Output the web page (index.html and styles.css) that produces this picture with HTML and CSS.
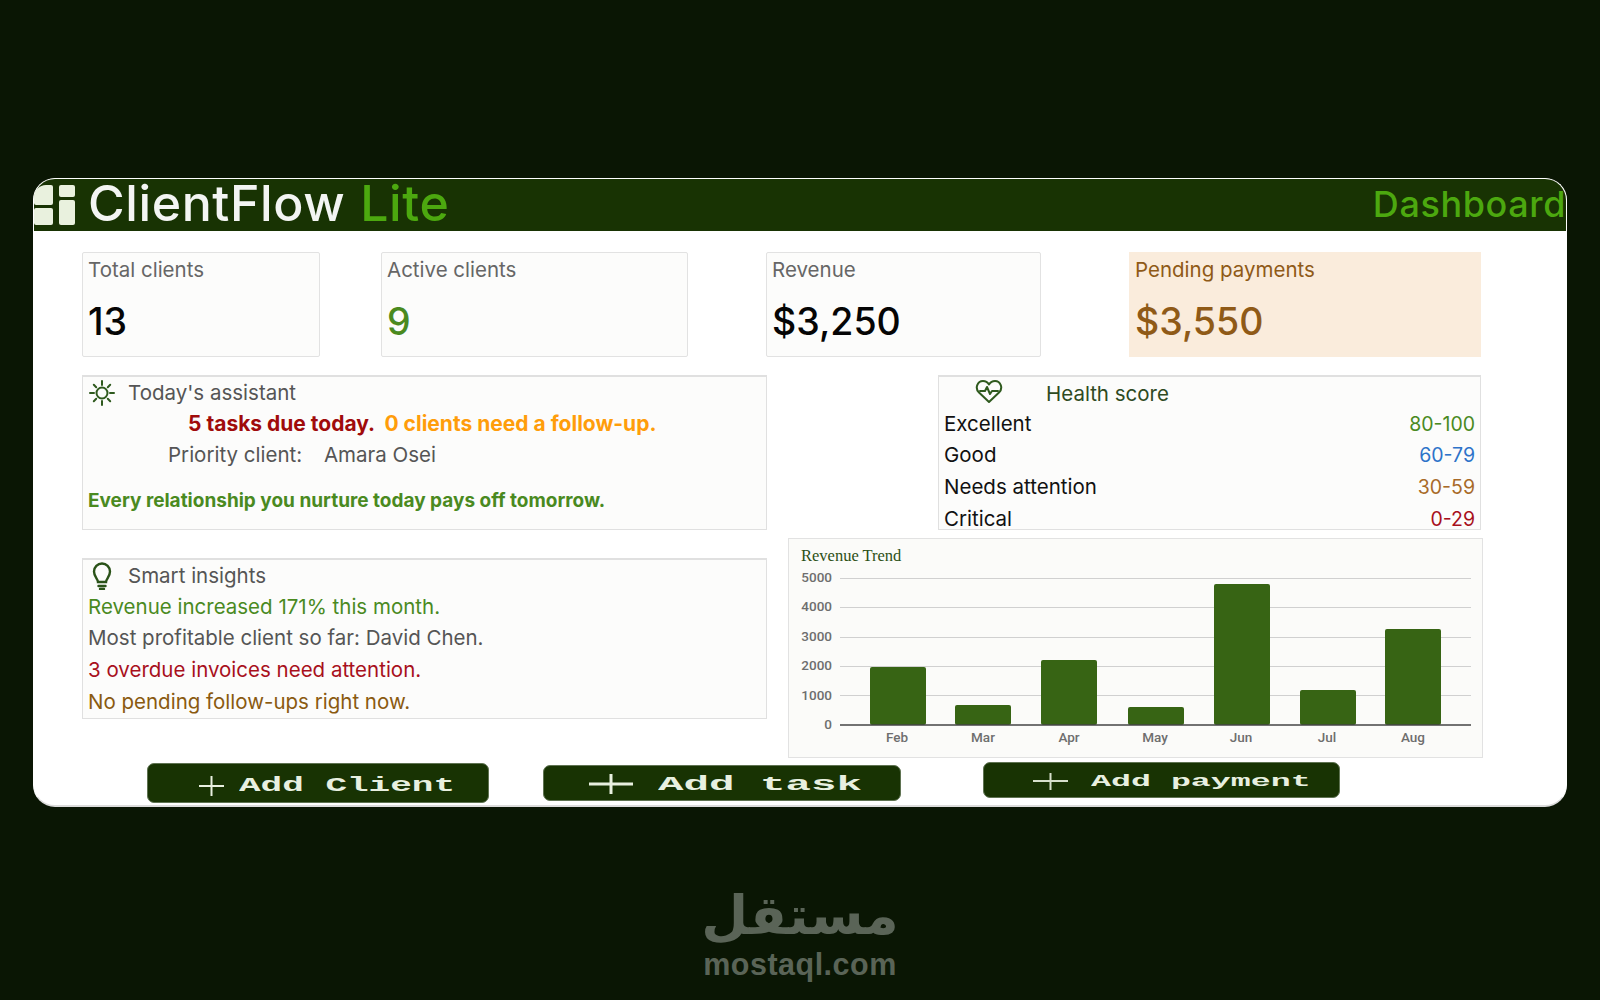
FILE: index.html
```html
<!DOCTYPE html>
<html lang="en">
<head>
    <meta charset="UTF-8">
    <title>ClientFlow Lite - Dashboard</title>
    <link rel="stylesheet" href="styles.css">
</head>
<body>

    <div class="sheet">
        <header class="topbar">
            <div class="brand">
                <div class="tiles">
                    <div class="tiles-col">
                        <span class="tile tile-tl"></span>
                        <span class="tile tile-bl"></span>
                    </div>
                    <div class="tiles-col">
                        <span class="tile tile-tr"></span>
                        <span class="tile tile-br"></span>
                    </div>
                </div>
                <span class="brand-name">ClientFlow <span class="brand-lite">Lite</span></span>
            </div>
            <div class="page-name">Dashboard</div>
        </header>

        <section class="stats">
            <div class="stat stat-total">
                <div class="stat-label">Total clients</div>
                <div class="stat-value">13</div>
            </div>
            <div class="stat stat-active">
                <div class="stat-label">Active clients</div>
                <div class="stat-value text-green">9</div>
            </div>
            <div class="stat stat-revenue">
                <div class="stat-label">Revenue</div>
                <div class="stat-value">$3,250</div>
            </div>
            <div class="stat stat-pending">
                <div class="stat-label">Pending payments</div>
                <div class="stat-value">$3,550</div>
            </div>
        </section>

        <section class="main">
            <div class="left-col">
                <div class="panel assistant">
                    <div class="row panel-title">
                        <svg class="title-icon" width="28" height="28" viewBox="0 0 28 28" fill="none" stroke="#2f5a1e" stroke-width="2" stroke-linecap="round">
                            <circle cx="14" cy="14" r="5.5"/>
                            <path d="M14 2v4M14 22v4M2 14h4M22 14h4M5.8 5.8l2.4 2.4M19.8 19.8l2.4 2.4M5.8 22.2l2.4-2.4M19.8 8.2l2.4-2.4"/>
                        </svg>
                        <span>Today's assistant</span>
                    </div>
                    <div class="row due-line">
                        <span class="text-due">5 tasks due today.</span>
                        <span class="text-follow">0 clients need a follow-up.</span>
                    </div>
                    <div class="row priority-line">
                        <span>Priority client:</span>
                        <span class="priority-name">Amara Osei</span>
                    </div>
                    <div class="row quote">Every relationship you nurture today pays off tomorrow.</div>
                </div>

                <div class="panel insights">
                    <div class="row panel-title">
                        <svg class="title-icon" width="28" height="28" viewBox="0 0 28 28" fill="none" stroke="#2a5218" stroke-width="2.4" stroke-linecap="round">
                            <path d="M10 20c0-3-4-5-4-10.500a8 8 0 0 1 16 0c0 5.500-4 7.500-4 10.500z"/>
                            <path d="M10.500 24h7M12 27h4"/>
                        </svg>
                        <span>Smart insights</span>
                    </div>
                    <div class="row text-green">Revenue increased 171% this month.</div>
                    <div class="row">Most profitable client so far: David Chen.</div>
                    <div class="row text-red">3 overdue invoices need attention.</div>
                    <div class="row text-brown">No pending follow-ups right now.</div>
                </div>
            </div>

            <div class="right-col">
                <div class="panel health">
                    <div class="row health-title">
                        <svg class="health-icon" width="28" height="25" viewBox="0 0 28 25" fill="none" stroke="#2f5a1e" stroke-width="2" stroke-linejoin="round" stroke-linecap="round">
                            <path d="M14 23L4 13.500C-.5 9 2.500 2 8 2c2.800 0 4.800 1.500 6 3.500C15.200 3.500 17.200 2 20 2c5.500 0 8.500 7 4 11.500z"/>
                            <path d="M5 12h5l2-4 3 7 2-3h6"/>
                        </svg>
                        <span>Health score</span>
                    </div>
                    <div class="row score"><span>Excellent</span><span class="score-range text-green">80-100</span></div>
                    <div class="row score"><span>Good</span><span class="score-range text-blue">60-79</span></div>
                    <div class="row score"><span>Needs attention</span><span class="score-range text-tan">30-59</span></div>
                    <div class="row score"><span>Critical</span><span class="score-range text-red">0-29</span></div>
                </div>

                <div class="chart-box">
                    <svg class="chart" width="693" height="218" viewBox="0 0 693 218">
                        <text class="chart-title" x="12" y="22">Revenue Trend</text>
                        <g class="grid-lines">
                            <line x1="51" x2="682" y1="39.500" y2="39.500"/>
                            <line x1="51" x2="682" y1="68.500" y2="68.500"/>
                            <line x1="51" x2="682" y1="98.500" y2="98.500"/>
                            <line x1="51" x2="682" y1="127.500" y2="127.500"/>
                            <line x1="51" x2="682" y1="156.500" y2="156.500"/>
                        </g>
                        <g class="bars">
                            <rect x="81" y="128" width="56" height="58" rx="2"/>
                            <rect x="166" y="166" width="56" height="20" rx="2"/>
                            <rect x="252" y="121" width="56" height="65" rx="2"/>
                            <rect x="339" y="168" width="56" height="18" rx="2"/>
                            <rect x="425" y="45" width="56" height="141" rx="2"/>
                            <rect x="511" y="151" width="56" height="35" rx="2"/>
                            <rect x="596" y="90" width="56" height="96" rx="2"/>
                        </g>
                        <line class="axis" x1="51" x2="682" y1="186" y2="186"/>
                        <g class="y-labels">
                            <text x="43" y="43">5000</text>
                            <text x="43" y="72">4000</text>
                            <text x="43" y="102">3000</text>
                            <text x="43" y="131">2000</text>
                            <text x="43" y="161">1000</text>
                            <text x="43" y="190">0</text>
                        </g>
                        <g class="x-labels">
                            <text x="108" y="203">Feb</text>
                            <text x="194" y="203">Mar</text>
                            <text x="280" y="203">Apr</text>
                            <text x="366" y="203">May</text>
                            <text x="452" y="203">Jun</text>
                            <text x="538" y="203">Jul</text>
                            <text x="624" y="203">Aug</text>
                        </g>
                    </svg>
                </div>
            </div>
        </section>

        <section class="actions">
            <button class="btn btn-client" type="button">
                <svg width="25" height="20" viewBox="0 0 25 20" stroke="#e8f0e0" stroke-width="2"><path d="M0 10h25M12.500 0v20"/></svg>
                <span class="btn-text">Add Client</span>
            </button>
            <button class="btn btn-task" type="button">
                <svg width="44" height="20" viewBox="0 0 44 20" stroke="#e8f0e0" stroke-width="3"><path d="M0 10h44M22 0v20"/></svg>
                <span class="btn-text">Add task</span>
            </button>
            <button class="btn btn-payment" type="button">
                <svg width="35" height="17" viewBox="0 0 35 17" stroke="#d6e0cc" stroke-width="2"><path d="M0 8h35M17.500 0v17"/></svg>
                <span class="btn-text">Add payment</span>
            </button>
        </section>
    </div>

    <footer class="watermark">
        <div class="watermark-ar" lang="ar" dir="rtl">مستقل</div>
        <div class="watermark-en">mostaql.com</div>
    </footer>

</body>
</html>
```

FILE: styles.css
```css
* {
    margin: 0;
    padding: 0;
    box-sizing: border-box;
}

body {
    font-family: Inter, "Noto Sans", sans-serif;
    background-color: #0a1604;
    height: 1000px;
    overflow: hidden;
}

.sheet {
    width: 1534px;
    height: 629px;
    margin: 178px 0 0 33px;
    background-color: #fff;
    border: 1px solid #fff;
    border-bottom: 2px solid #dcdcdc;
    border-radius: 22px;
}

/* top bar */
.topbar {
    height: 52px;
    background-color: #183303;
    border-radius: 21px 21px 0 0;
    display: flex;
    justify-content: space-between;
    align-items: center;
}

.brand {
    display: flex;
    align-items: center;
}

.tiles {
    display: flex;
    gap: 6px;
    width: 54px;
}

.tiles-col {
    display: flex;
    flex-direction: column;
    gap: 3px;
}

.tile {
    display: block;
    background-color: #e9f1de;
    border-radius: 2px;
}

.tiles-col:first-child .tile {
    width: 19px;
}

.tiles-col:last-child .tile {
    width: 16px;
}

.tile-tl {
    height: 20px;
    border-top-left-radius: 12px;
}

.tile-bl {
    height: 17px;
}

.tile-tr {
    height: 12px;
}

.tile-br {
    height: 25px;
}

.brand-name {
    font-size: 50px;
    line-height: 46px;
    font-weight: 500;
    color: #f3f5f3;
    letter-spacing: 0.6px;
    padding-bottom: 5px;
}

.brand-lite {
    color: #4ca80f;
    margin-left: 1px;
}

.page-name {
    font-size: 36px;
    line-height: 44px;
    font-weight: 500;
    letter-spacing: 0.6px;
    color: #4ca80f;
    white-space: nowrap;
    padding-bottom: 3px;
}

/* stat cards */
.stats {
    display: flex;
    margin: 21px 0 0 48px;
}

.stat {
    height: 105px;
    padding: 5px 5px;
    background-color: #fcfcfb;
    border: 1px solid #e2e2e2;
    border-radius: 2px;
}

.stat-total {
    width: 238px;
}

.stat-active {
    width: 307px;
    margin-left: 61px;
}

.stat-revenue {
    width: 275px;
    margin-left: 78px;
}

.stat-pending {
    width: 352px;
    margin-left: 88px;
    background-color: #faecdc;
    border-color: #faecdc;
    border-radius: 0;
    color: #8f5a17;
}

.stat-label {
    font-size: 20.500px;
    line-height: 24px;
    color: #666;
}

.stat-value {
    font-size: 37.500px;
    font-weight: 500;
    line-height: 44px;
    margin-top: 18px;
    color: #050505;
}

.stat-pending .stat-label,
.stat-pending .stat-value {
    color: #8f5a17;
}

/* panels */
.main {
    display: flex;
    margin: 18px 0 0 48px;
    height: 383px;
}

.left-col {
    width: 706px;
}

.right-col {
    width: 696px;
}

.panel {
    background-color: #fcfcfb;
    border: 1px solid #e0e0e0;
    border-top-width: 2px;
    font-size: 20.500px;
    color: #555;
}

.row {
    height: 31.700px;
    line-height: 30px;
    padding-left: 5px;
    white-space: nowrap;
}

.assistant {
    width: 685px;
    height: 155px;
}

.insights {
    width: 685px;
    height: 161px;
    margin-top: 28px;
}

.panel-title {
    display: flex;
    align-items: center;
}

.title-icon {
    margin-right: 12px;
    flex-shrink: 0;
}

.due-line {
    padding-left: 105px;
    font-size: 21px;
    font-weight: 700;
}

.text-due {
    color: #a00b0b;
}

.text-follow {
    color: #ff9d0a;
    margin-left: 5px;
}

.priority-line {
    padding-left: 85px;
}

.priority-name {
    margin-left: 16px;
}

.quote {
    margin-top: 14px;
    font-size: 19px;
    font-weight: 700;
    color: #4a8a1f;
}

.text-green {
    color: #4a8a1f;
}

.text-red {
    color: #a8101c;
}

.text-brown {
    color: #8a5a10;
}

.text-blue {
    color: #2d73c9;
}

.text-tan {
    color: #a86a28;
}

.health {
    width: 543px;
    height: 155px;
    margin-left: 150px;
    color: #111;
    overflow: hidden;
}

.health-title {
    display: flex;
    align-items: flex-start;
    padding-left: 36px;
    color: #2e4a22;
}

.health-title span {
    margin-left: 43px;
    line-height: 34px;
}

.health-icon {
    margin-top: 2px;
}

.score {
    display: flex;
    justify-content: space-between;
    padding-right: 5px;
}

.score-range {
    font-size: 19.500px;
}

/* chart */
.chart-box {
    width: 695px;
    height: 220px;
    margin-top: 8px;
    background-color: #fbfbf9;
    border: 1px solid #e2e2e2;
}

.chart {
    display: block;
}

.chart-title {
    font-family: "Liberation Serif", serif;
    font-size: 16.500px;
    fill: #2d5016;
}

.grid-lines line {
    stroke: #d0d0d0;
    stroke-width: 1;
}

.bars rect {
    fill: #376414;
}

.axis {
    stroke: #444;
    stroke-width: 1.500;
}

.y-labels text,
.x-labels text {
    font-family: Roboto, sans-serif;
    font-weight: 500;
    font-size: 13.500px;
    fill: #6e6e6e;
}

.y-labels text {
    text-anchor: end;
}

.x-labels text {
    text-anchor: middle;
}

/* action buttons */
.actions {
    display: flex;
    align-items: flex-start;
}

.btn {
    display: flex;
    align-items: center;
    background-color: #183303;
    border: 1px solid #5f7352;
    border-radius: 7px;
    color: #e8f0e0;
    font-family: "Liberation Mono", monospace;
    font-weight: 700;
    white-space: nowrap;
}

.btn-text {
    display: inline-block;
    transform-origin: left center;
    white-space: pre;
}

.btn-client {
    width: 342px;
    height: 40px;
    margin: 5px 0 0 113px;
    padding: 5px 0 0 51px;
    font-size: 20px;
}

.btn-client .btn-text {
    margin-left: 15px;
    transform: scaleX(1.800);
}

.btn-task {
    width: 358px;
    height: 36px;
    margin: 7px 0 0 54px;
    padding: 2px 0 0 45px;
    font-size: 20px;
}

.btn-task .btn-text {
    margin-left: 25px;
    transform: scaleX(2.125);
}

.btn-payment {
    width: 357px;
    height: 36px;
    margin: 4px 0 0 82px;
    padding: 3px 0 0 49px;
    font-size: 16px;
}

.btn-payment .btn-text {
    margin-left: 23px;
    transform: scaleX(2.080);
}

/* watermark */
.watermark {
    margin-top: 77px;
    text-align: center;
    color: #5a6457;
    font-weight: 700;
}

.watermark-ar {
    font-family: "DejaVu Sans", sans-serif;
    font-size: 54px;
    line-height: 63px;
}

.watermark-en {
    font-family: "Liberation Sans", sans-serif;
    font-size: 30.500px;
    line-height: 35px;
    letter-spacing: 0.500px;
}
```
